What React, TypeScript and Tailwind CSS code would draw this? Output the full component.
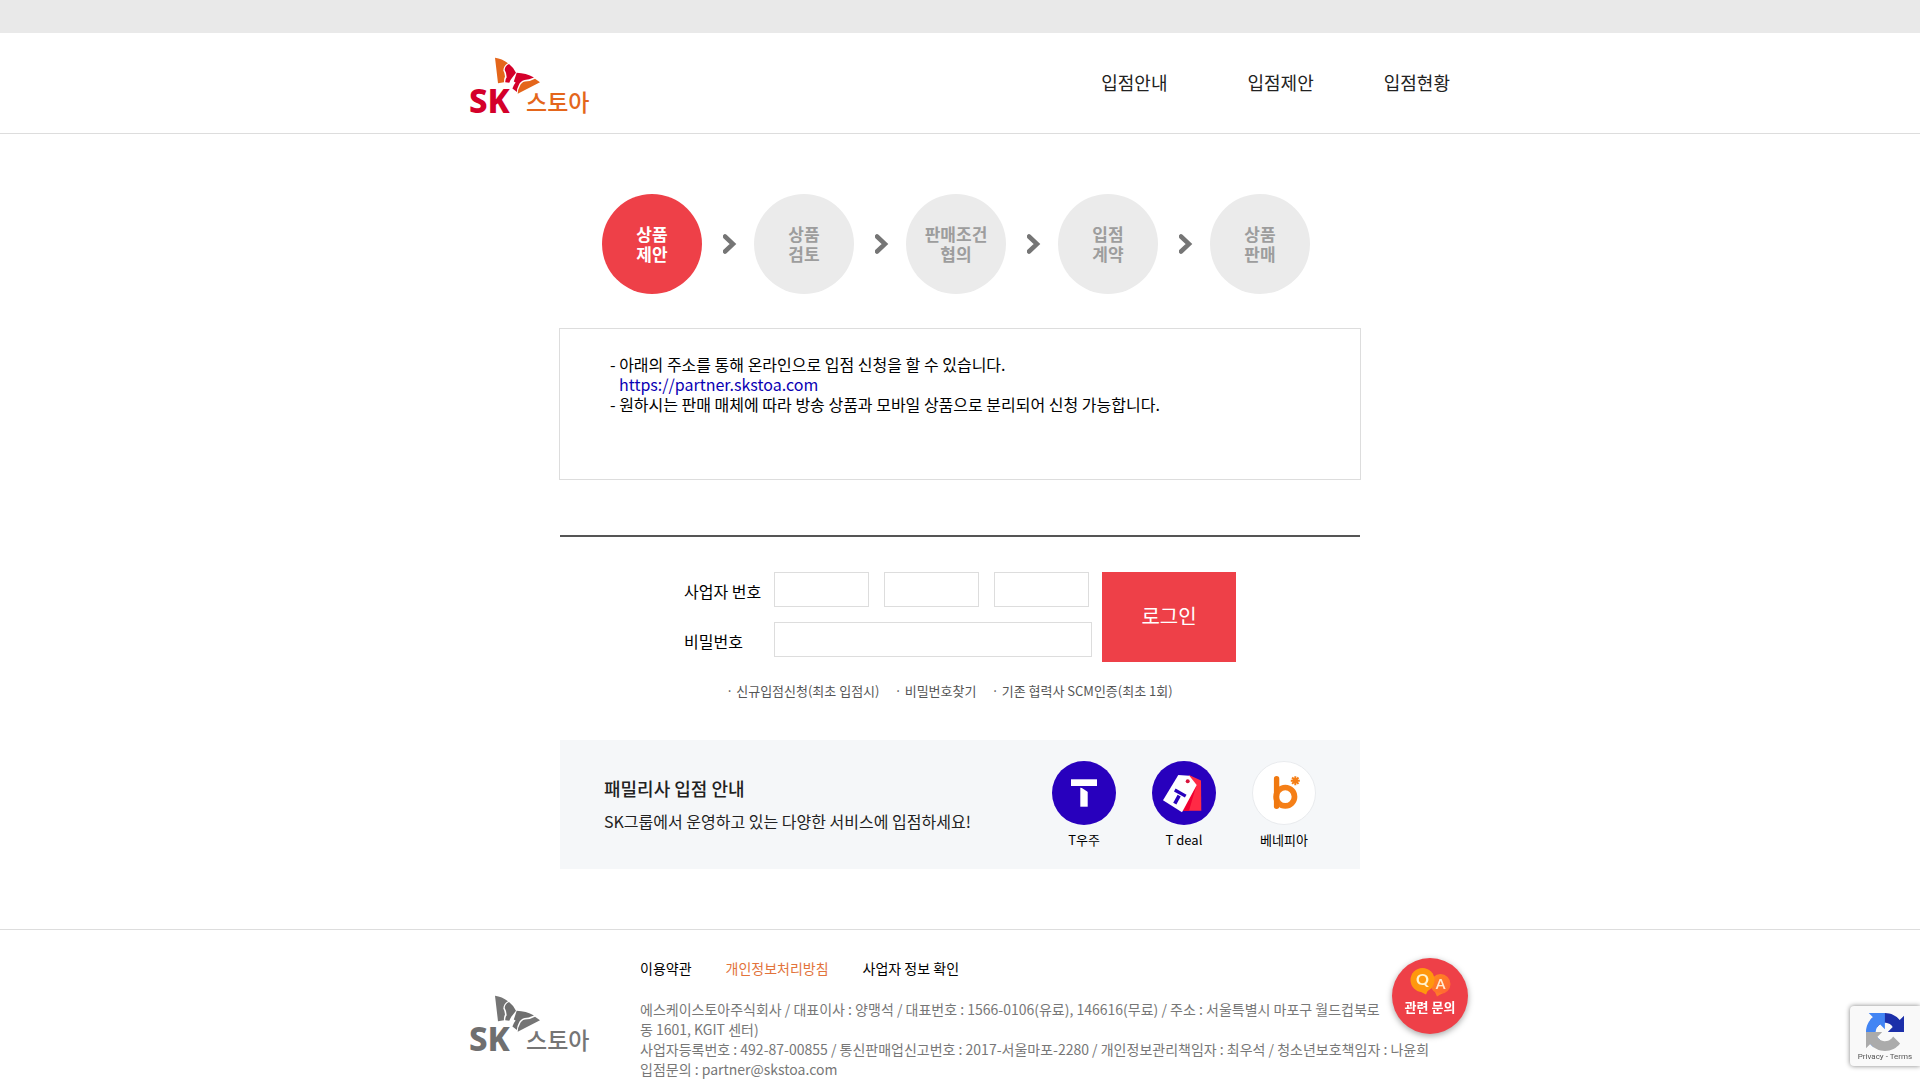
import { ReactNode } from "react";

const menus = ["입점안내", "입점제안", "입점현황"];

const steps = [
  ["상품", "제안"],
  ["상품", "검토"],
  ["판매조건", "협의"],
  ["입점", "계약"],
  ["상품", "판매"],
];

const loginLinks = [
  "신규입점신청(최초 입점시)",
  "비밀번호찾기",
  "기존 협력사 SCM인증(최초 1회)",
];

function Logo({ gray = false }: { gray?: boolean }) {
  const red = gray ? "#6f6f6f" : "#d4002a";
  const orange = gray ? "#757575" : "#e4661b";
  return (
    <svg
      className="w-[124px] h-16 overflow-visible"
      viewBox="0 0 124 64"
      role="img"
      aria-label="SK스토아"
    >
      <path
        fill={orange}
        d="M25 .7Q32 1.6 38 6.3Q33.6 8.6 33.3 13.5Q34.8 16 35 19.5Q33.6 22 34 25.3L28 26.3Z"
      />
      <path
        fill={red}
        d="M39 7Q43.500 10.500 46 15.700L42.500 20.300Q40.500 22.600 39.300 25.700L35.300 25.300Q35 22.500 36.700 20.200Q36.600 16 34.700 13Q34.800 8.800 39 7Z"
      />
      <path
        fill={red}
        d="M46.700 15.800Q56 16 64 20.600Q59 22.800 54.500 22.900Q50.200 24.200 48.800 28Q46.800 31.500 47 35L42.400 31.600Q43.500 28 45.600 25.400L43.800 24.600Z"
      />
      <path
        fill={orange}
        d="M65 21.700L70 25.300L47.700 36.700Q47.800 32.500 49.800 29.300Q51 25.200 55 24.400Q60.500 24.400 65 21.700Z"
      />
      <text
        x="-1"
        y="56"
        fontSize="33"
        className="font-extrabold"
        fontFamily="Noto Sans, sans-serif"
        fill={red}
      >
        SK
      </text>
      <text
        x="56"
        y="54"
        fontSize="23"
        className="font-medium"
        fontFamily="Noto Sans CJK KR, sans-serif"
        fill={orange}
      >
        스토아
      </text>
    </svg>
  );
}

function Chevron() {
  return (
    <svg className="w-[14px] h-5" viewBox="0 0 14 20" aria-hidden="true">
      <path
        d="M2 2.500L10 10L2 17.500"
        fill="none"
        stroke="#757575"
        strokeWidth="4.500"
        strokeLinecap="round"
      />
    </svg>
  );
}

function UniverseIcon() {
  return (
    <svg className="size-16" viewBox="0 0 64 64" aria-hidden="true">
      <circle cx="32" cy="32" r="32" fill="#2800bd" />
      <rect x="19" y="18.300" width="26" height="6.700" fill="#fff" />
      <rect x="28.300" y="26.700" width="7.400" height="19" fill="#fff" />
      <path d="M28.300 26L36 26L36 31Z" fill="#2800bd" />
    </svg>
  );
}

function DealIcon() {
  return (
    <svg className="size-16" viewBox="0 0 64 64" aria-hidden="true">
      <circle cx="32" cy="32" r="32" fill="#2800bd" />
      <path d="M37 14L49 19.500L49.300 49.700H31Z" fill="#ff2a45" />
      <path d="M44.500 24L37 49.700H31Z" fill="#ef0030" />
      <path d="M26.300 14L37.300 14.700L44.700 24L30 51.300L11 39.300Z" fill="#fff" />
      <circle cx="35.700" cy="20.300" r="2" fill="#d8143c" />
      <g transform="rotate(29 28 32)" fill="#2800bd">
        <rect x="22" y="30.300" width="12.500" height="3.300" />
        <rect x="26.800" y="34.800" width="3.600" height="9" />
      </g>
    </svg>
  );
}

function BenepiaIcon() {
  return (
    <svg className="size-16" viewBox="0 0 64 64" aria-hidden="true">
      <circle cx="32" cy="32" r="31.500" fill="#fff" stroke="#e9ebee" />
      <circle
        cx="33.300"
        cy="35.700"
        r="9.200"
        fill="none"
        stroke="#f57f17"
        strokeWidth="5.700"
      />
      <path
        d="M24.600 17.700V45.300"
        stroke="#f0780f"
        strokeWidth="5.400"
        strokeLinecap="round"
      />
      <path
        d="M43.300 15.200V24.200M38.800 19.700H47.800M40.100 16.500L46.500 22.900M46.500 16.500L40.100 22.900"
        stroke="#f57f17"
        strokeWidth="2"
      />
    </svg>
  );
}

function FamilyLink({ label, children }: { label: string; children: ReactNode }) {
  return (
    <a href="#" className="flex w-16 flex-col items-center text-black">
      {children}
      <span className="mt-[5px] text-[13px] leading-5 whitespace-nowrap">
        {label}
      </span>
    </a>
  );
}

function InquiryButton() {
  return (
    <button
      type="button"
      className="fixed right-[calc(50%-508px)] bottom-[46px] flex size-[76px] flex-col items-center rounded-full bg-[#ee4048] pt-2 text-white shadow-[0_2px_6px_rgba(0,0,0,0.35)]"
    >
      <svg className="w-11 h-[31px]" viewBox="0 0 44 31" aria-hidden="true">
        <defs>
          <linearGradient id="answer" x1="0" y1="0" x2="1" y2="1">
            <stop offset="0" stopColor="#ff8a1c" />
            <stop offset="1" stopColor="#ff6238" />
          </linearGradient>
        </defs>
        <circle cx="32.500" cy="18" r="10" fill="url(#answer)" />
        <path d="M27 26L29 30.500L35 27Z" fill="#ff7a2a" />
        <circle cx="14.500" cy="14" r="12" fill="#ff980d" />
        <path d="M11 25L18 28.500L20 24Z" fill="#ff980d" />
        <text
          x="14.500"
          y="19"
          fontSize="16"
          textAnchor="middle"
          className="font-bold"
          fontFamily="Lato, sans-serif"
          fill="#fff3cf"
        >
          Q
        </text>
        <text
          x="32.500"
          y="22.500"
          fontSize="14"
          textAnchor="middle"
          className="font-bold"
          fontFamily="Lato, sans-serif"
          fill="#ffe9d2"
        >
          A
        </text>
      </svg>
      <span className="text-[13px] leading-5 font-bold">관련 문의</span>
    </button>
  );
}

function RecaptchaBadge() {
  return (
    <div className="fixed right-0 bottom-[14px] flex h-[60px] w-[70px] flex-col items-center rounded-l-sm bg-[#f9f9f9] pt-[7px] shadow-[0_0_5px_#808080]">
      <svg className="size-[38px]" viewBox="0 0 64 64" aria-hidden="true">
        <path
          fill="#1c2fa9"
          d="M64 31.955l-.033-1.370V4.687l-7.160 7.160C50.948 4.674 42.033.093 32.050.093c-10.400 0-19.622 4.960-25.458 12.640l11.736 11.860a15.550 15.550 0 0 1 4.754-5.334c2.050-1.600 4.952-2.906 8.968-2.906.485 0 .860.057 1.135.163 4.976.393 9.288 3.140 11.828 7.124l-8.307 8.307L64 31.953"
        />
        <path
          fill="#4285f4"
          d="M31.862.094l-1.370.033H4.594l7.160 7.160C4.580 13.147 0 22.060 0 32.046c0 10.400 4.960 19.622 12.640 25.458L24.500 45.768a15.550 15.550 0 0 1-5.334-4.754c-1.600-2.050-2.906-4.952-2.906-8.968 0-.485.057-.860.163-1.135.393-4.976 3.140-9.288 7.124-11.828l8.307 8.307L31.860.095"
        />
        <path
          fill="#ababab"
          d="M.001 32.045l.033 1.370v25.898l7.160-7.160c5.860 7.173 14.774 11.754 24.760 11.754 10.400 0 19.622-4.960 25.458-12.640l-11.736-11.860a15.550 15.550 0 0 1-4.754 5.334c-2.050 1.600-4.952 2.906-8.968 2.906-.485 0-.860-.057-1.135-.163-4.976-.393-9.288-3.140-11.828-7.124l8.307-8.307c-10.522.040-22.400.066-27.295-.005"
        />
      </svg>
      <p className="font-[Roboto,sans-serif] text-[8px] leading-3 text-[#555]">
        <a href="#">Privacy</a> - <a href="#">Terms</a>
      </p>
    </div>
  );
}

export default function App() {
  return (
    <div className="w-full bg-white font-['Noto_Sans_CJK_KR',sans-serif] text-black">
      <div className="h-[33px] w-full bg-[#e9e9e9]" />
      <header className="w-full border-b border-[#ddd]">
        <div className="mx-auto flex h-[100px] max-w-[980px] items-start justify-between">
          <a href="#" className="pt-6">
            <Logo />
          </a>
          <nav className="flex pt-9 text-[18px] leading-[26px] text-[#222]">
            {menus.map((menu) => (
              <a key={menu} href="#" className="ml-[70px] even:ml-20">
                {menu}
              </a>
            ))}
          </nav>
        </div>
      </header>

      <main className="mx-auto max-w-[802px] px-px pt-[60px] pb-[60px]">
        <ol className="flex pl-[42px]">
          {steps.map(([first, second], i) => (
            <li key={i} className="flex items-center">
              {i > 0 && (
                <span className="flex w-[52px] pl-[21px]">
                  <Chevron />
                </span>
              )}
              <span
                className={
                  i === 0
                    ? "flex size-[100px] flex-col items-center justify-center rounded-full bg-[#ee4048] pb-px text-[17px] leading-5 font-bold text-white"
                    : "flex size-[100px] flex-col items-center justify-center rounded-full bg-[#ebebeb] pb-px text-[17px] leading-5 font-bold text-[#9d9d9d]"
                }
              >
                <span>{first}</span>
                <span>{second}</span>
              </span>
            </li>
          ))}
        </ol>

        <div className="-mx-px mt-[34px] min-h-[152px] border border-[#ddd] px-[50px] py-[25px] text-[16px] leading-5">
          <p>- 아래의 주소를 통해 온라인으로 입점 신청을 할 수 있습니다.</p>
          <p className="pl-[9px]">
            <a href="#" className="text-[#0a00b4]">
              https://partner.skstoa.com
            </a>
          </p>
          <p>
            - 원하시는 판매 매체에 따라 방송 상품과 모바일 상품으로 분리되어 신청
            가능합니다.
          </p>
        </div>

        <hr className="mt-[55px] border-t-2 border-[#555]" />

        <form
          className="mt-[35px] flex justify-center gap-[10px] text-[16px]"
          onSubmit={(e) => e.preventDefault()}
        >
          <div className="flex flex-col gap-[15px]">
            <div className="flex">
              <label htmlFor="biz1" className="w-[90px] pt-[7px] leading-6">
                사업자 번호
              </label>
              <div className="flex gap-[15px]">
                <input
                  id="biz1"
                  type="text"
                  className="h-[35px] w-[95px] border border-[#ddd] px-2"
                />
                <input
                  type="text"
                  aria-label="사업자 번호 가운데 자리"
                  className="h-[35px] w-[95px] border border-[#ddd] px-2"
                />
                <input
                  type="text"
                  aria-label="사업자 번호 끝자리"
                  className="h-[35px] w-[95px] border border-[#ddd] px-2"
                />
              </div>
            </div>
            <div className="flex">
              <label htmlFor="password" className="w-[90px] pt-[7px] leading-6">
                비밀번호
              </label>
              <input
                id="password"
                type="password"
                className="h-[35px] w-[318px] border border-[#ddd] px-2"
              />
            </div>
          </div>
          <button
            type="submit"
            className="h-[90px] w-[134px] bg-[#ee4048] pb-[3px] text-[20px] text-white"
          >
            로그인
          </button>
        </form>

        <div className="mt-[19px] flex gap-[15px] pl-[166px] text-[13px] leading-5 text-[#555]">
          {loginLinks.map((link) => (
            <a key={link} href="#">
              · {link}
            </a>
          ))}
        </div>

        <section className="mt-[39px] flex justify-between bg-[#f5f7f9] px-11 pt-[21px] pb-[19px]">
          <div className="pt-[14px] text-[#222]">
            <h2 className="text-[18px] leading-[26px] font-medium">
              패밀리사 입점 안내
            </h2>
            <p className="mt-2 text-[16px] leading-6">
              SK그룹에서 운영하고 있는 다양한 서비스에 입점하세요!
            </p>
          </div>
          <div className="flex gap-9">
            <FamilyLink label="T우주">
              <UniverseIcon />
            </FamilyLink>
            <FamilyLink label="T deal">
              <DealIcon />
            </FamilyLink>
            <FamilyLink label="베네피아">
              <BenepiaIcon />
            </FamilyLink>
          </div>
        </section>
      </main>

      <footer className="w-full border-t border-[#ddd]">
        <div className="mx-auto flex max-w-[980px] pt-7">
          <div className="w-[170px] shrink-0 pt-[37px]">
            <Logo gray />
          </div>
          <div className="text-[14px] leading-5">
            <div className="flex gap-[34px]">
              <a href="#">이용약관</a>
              <a href="#" className="text-[#e2733b]">
                개인정보처리방침
              </a>
              <a href="#">사업자 정보 확인</a>
            </div>
            <address className="mt-[21px] text-[#777] not-italic">
              에스케이스토아주식회사 / 대표이사 : 양맹석 / 대표번호 :
              1566-0106(유료), 146616(무료) / 주소 : 서울특별시 마포구 월드컵북로
              <br />동 1601, KGIT 센터)
              <br />
              사업자등록번호 : 492-87-00855 / 통신판매업신고번호 :
              2017-서울마포-2280 / 개인정보관리책임자 : 최우석 / 청소년보호책임자
              : 나윤희
              <br />
              입점문의 : partner@skstoa.com
            </address>
          </div>
        </div>
      </footer>

      <InquiryButton />
      <RecaptchaBadge />
    </div>
  );
}
